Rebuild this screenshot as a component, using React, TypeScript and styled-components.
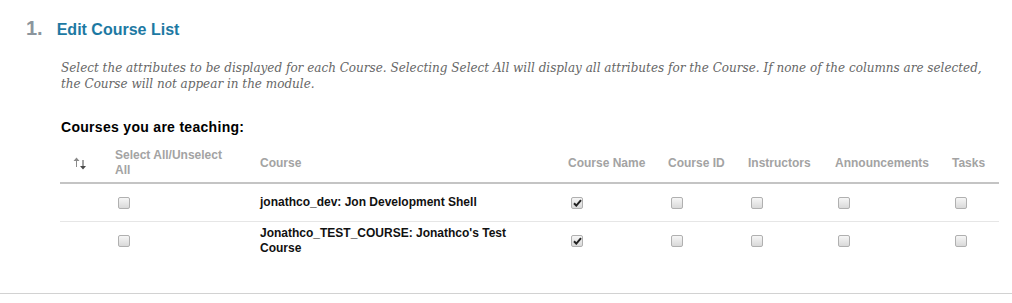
import styled, { createGlobalStyle } from "styled-components";

const GlobalStyle = createGlobalStyle`
  body {
    margin: 0;
    background: #fff;
    font-family: "Liberation Sans", Arial, sans-serif;
  }
`;

const COLUMNS = "55px 145px 308px 100px 80px 87px 117px 47px";

const Section = styled.div`
  padding: 16px 0 0 26px;
  height: 294px;
  box-sizing: border-box;
  border-bottom: 1px solid #d2d2d2;
`;

const Heading = styled.div`
  display: flex;
  align-items: baseline;
  gap: 14px;
`;

const StepNumber = styled.span`
  font-size: 20px;
  line-height: 24px;
  font-weight: 700;
  color: #8b959d;
`;

const StepTitle = styled.h2`
  margin: 0;
  font-size: 16px;
  line-height: 24px;
  font-weight: 700;
  color: #1d79a3;
`;

const Body = styled.div`
  margin-left: 34px;
  width: 939px;
`;

const Description = styled.p`
  margin: 18px 0 0 1px;
  font-family: "DejaVu Serif", Georgia, serif;
  font-style: italic;
  font-size: 12px;
  line-height: 16px;
  color: #666;
`;

const SubHeading = styled.h3`
  margin: 27px 0 0 1px;
  font-size: 14px;
  line-height: 16px;
  font-weight: 700;
  letter-spacing: 0.3px;
  color: #000;
`;

const Row = styled.div<{ $head?: boolean }>`
  display: grid;
  grid-template-columns: ${COLUMNS};
  align-items: center;
  min-height: 38px;
  padding: 4px 0;
  box-sizing: border-box;
  border-bottom: ${(p) => (p.$head ? "2px solid #c4c4c4" : "1px solid #e6e6e6")};
  &:last-child {
    border-bottom: none;
  }
`;

const Table = styled.div`
  margin-top: 9px;
`;

const HeadCell = styled.div<{ $narrow?: boolean }>`
  font-size: 12px;
  line-height: 15px;
  font-weight: 700;
  color: #a3a3a3;
  padding-right: ${(p) => (p.$narrow ? "30px" : "8px")};
`;

const SortCell = styled.div`
  display: flex;
  padding-left: 13px;
`;

const Cell = styled.div`
  font-size: 12px;
  line-height: 15px;
  font-weight: 700;
  color: #111;
  padding-right: 60px;
`;

const BoxCell = styled.div`
  display: flex;
  padding-left: 3px;
`;

const Box = styled.span`
  display: inline-flex;
  align-items: center;
  justify-content: center;
  width: 12px;
  height: 12px;
  box-sizing: border-box;
  border: 1px solid #b0b0b0;
  border-radius: 2px;
  background: linear-gradient(#f6f6f6, #d9d9d9);
`;

function SortIcon() {
  return (
    <svg width="14" height="13" viewBox="0 0 14 13">
      <path d="M3.5 0.5 L0.5 4 H3 V10 H4 V4 H6.5 Z" fill="#8a8a8a" />
      <path d="M10 12.5 L7 9 H9.5 V3 H10.5 V9 H13 Z" fill="#4a4a4a" />
    </svg>
  );
}

function Check({ checked }: { checked?: boolean }) {
  return (
    <Box>
      {checked && (
        <svg width="9" height="8" viewBox="0 0 9 8">
          <path d="M1 4.3 L3.3 6.6 L8 1.2" stroke="#222" strokeWidth="2" fill="none" />
        </svg>
      )}
    </Box>
  );
}

const headers = ["Course Name", "Course ID", "Instructors", "Announcements", "Tasks"];

const courses = [
  { name: "jonathco_dev: Jon Development Shell", attrs: [true, false, false, false, false] },
  { name: "Jonathco_TEST_COURSE: Jonathco's Test Course", attrs: [true, false, false, false, false] },
];

export default function App() {
  return (
    <>
      <GlobalStyle />
      <Section>
        <Heading>
          <StepNumber>1.</StepNumber>
          <StepTitle>Edit Course List</StepTitle>
        </Heading>
        <Body>
          <Description>
            Select the attributes to be displayed for each Course. Selecting Select All will display all
            attributes for the Course. If none of the columns are selected, the Course will not appear in
            the module.
          </Description>
          <SubHeading>Courses you are teaching:</SubHeading>
          <Table>
            <Row $head>
              <SortCell>
                <SortIcon />
              </SortCell>
              <HeadCell $narrow>Select All/Unselect All</HeadCell>
              <HeadCell>Course</HeadCell>
              {headers.map((h) => (
                <HeadCell key={h}>{h}</HeadCell>
              ))}
            </Row>
            {courses.map((c) => (
              <Row key={c.name}>
                <div />
                <BoxCell>
                  <Check />
                </BoxCell>
                <Cell>{c.name}</Cell>
                {c.attrs.map((a, i) => (
                  <BoxCell key={i}>
                    <Check checked={a} />
                  </BoxCell>
                ))}
              </Row>
            ))}
          </Table>
        </Body>
      </Section>
    </>
  );
}
